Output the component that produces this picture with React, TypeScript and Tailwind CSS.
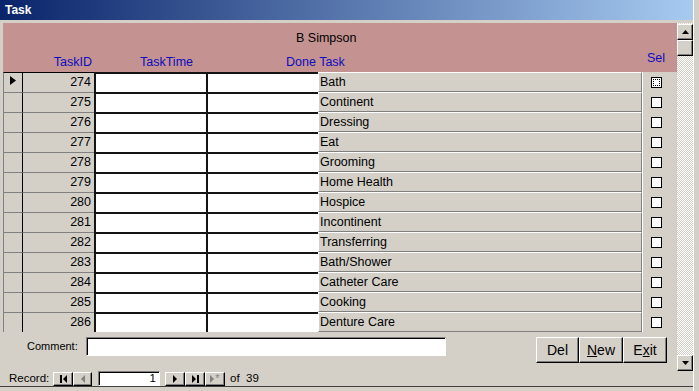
import React from 'react';

const rows: [number, string][] = [
  [274, 'Bath'],
  [275, 'Continent'],
  [276, 'Dressing'],
  [277, 'Eat'],
  [278, 'Grooming'],
  [279, 'Home Health'],
  [280, 'Hospice'],
  [281, 'Incontinent'],
  [282, 'Transferring'],
  [283, 'Bath/Shower'],
  [284, 'Catheter Care'],
  [285, 'Cooking'],
  [286, 'Denture Care'],
];

const raised =
  'bg-[#d4d0c8] border border-t-white border-l-white border-b-black border-r-black shadow-[inset_-1px_-1px_0_#808080]';

function NavBtn({ w, children }: { w: string; children: React.ReactNode }) {
  return <div className={`${w} h-[14px] flex items-center justify-center ${raised}`}>{children}</div>;
}

function Arrow({ dir, color = '#000' }: { dir: 'l' | 'r'; color?: string }) {
  return (
    <svg width="4" height="8" viewBox="0 0 4 8">
      <polygon points={dir === 'r' ? '0,0 4,4 0,8' : '4,0 0,4 4,8'} fill={color} />
    </svg>
  );
}

export default function App() {
  return (
    <div className="w-[699px] h-[391px] overflow-hidden bg-[#d4d0c8] flex font-['Liberation_Sans',Arial,sans-serif] text-black">
      <div className="w-[693px] flex flex-col">
        {/* title bar */}
        <div className="h-[20px] flex items-center pl-[5px] bg-[linear-gradient(to_right,#0a246a,#a6caf0)]">
          <span className="text-white font-bold text-[12px] leading-none">Task</span>
        </div>
        <div className="h-[3px]" />

        {/* form + scrollbar */}
        <div className="flex h-[348px]">
          <div className="w-[3px]" />
          <div className="w-[674px] flex flex-col">
            {/* header */}
            <div className="h-[49px] bg-[#c49290] flex flex-col">
              <div className="pt-[8px] pl-[293px] text-[12.5px] leading-[14px]">B Simpson</div>
              <div className="flex-1 flex items-end pb-[3px] text-[12.5px] leading-[14px] text-[#0c0cc0]">
                <div className="w-[20px]" />
                <div className="w-[71px] text-right pr-[2px]">TaskID</div>
                <div className="w-[112px] pl-[46px] whitespace-nowrap">TaskTime</div>
                <div className="w-[112px] pl-[80px] whitespace-nowrap">Done Task</div>
                <div className="w-[324px]" />
                <div className="pl-[5px] mb-[4px]">Sel</div>
              </div>
            </div>

            {/* detail rows */}
            <div className="flex flex-col">
              {rows.map(([id, task], i) => {
                const line = i === 0 ? 'border-black' : 'border-[#808080]';
                return (
                  <div key={id} className="h-[20px] flex text-[12.5px]">
                    <div className={`w-[20px] border-t border-l border-l-[#808080] border-r border-r-black ${line} flex items-center pl-[6px]`}>
                      {i === 0 && (
                        <svg width="6" height="9" viewBox="0 0 6 9" className="-mt-[4px]">
                          <polygon points="0,0 6,4.5 0,9" fill="#000" />
                        </svg>
                      )}
                    </div>
                    <div className={`w-[71px] border-t ${line} flex items-center justify-end pr-[3px]`}>{id}</div>
                    <div className="w-[112px] bg-white border-t-2 border-l-2 border-[#141414]" />
                    <div className="w-[112px] bg-white border-t-2 border-l-2 border-[#141414]" />
                    <div className="w-[324px] border border-t-white border-l-white border-b-[#808080] border-r-[#808080] shadow-[1px_0_0_#fff] flex items-center pl-[1px]">
                      {task}
                    </div>
                    <div className="flex-1 flex items-center pl-[9px]">
                      <div className="w-[11px] h-[11px] bg-white border border-black p-[1px]">
                        {i === 0 && <div className="w-full h-full border border-dotted border-black" />}
                      </div>
                    </div>
                  </div>
                );
              })}
            </div>

            {/* footer */}
            <div className="flex-1 flex items-start pt-[5px]">
              <div className="w-[83px] pl-[24px] h-[19px] flex items-center text-[11px]">Comment:</div>
              <div className="w-[360px] h-[19px] bg-white border border-t-[#808080] border-l-[#808080] border-b-white border-r-white shadow-[inset_1px_1px_0_#000]" />
              <div className="ml-[90px] flex text-[14px]">
                <div className={`w-[43px] h-[26px] flex items-center justify-center ${raised}`}>Del</div>
                <div className={`w-[44px] h-[26px] flex items-center justify-center ${raised}`}>
                  <span><span className="underline">N</span>ew</span>
                </div>
                <div className={`w-[44px] h-[26px] flex items-center justify-center ${raised}`}>
                  <span>E<span className="underline">x</span>it</span>
                </div>
              </div>
            </div>
          </div>

          {/* scrollbar */}
          <div className="w-[16px] flex flex-col pt-[1px] bg-[repeating-conic-gradient(#d4d0c8_0_25%,#ffffff_0_50%)] bg-[length:2px_2px]">
            <div className={`h-[16px] flex items-center justify-center ${raised}`}>
              <svg width="7" height="4" viewBox="0 0 7 4"><polygon points="0,4 3.5,0 7,4" fill="#000" /></svg>
            </div>
            <div className={`h-[16px] ${raised}`} />
            <div className="flex-1" />
            <div className={`h-[16px] flex items-center justify-center ${raised}`}>
              <svg width="7" height="4" viewBox="0 0 7 4"><polygon points="0,0 7,0 3.5,4" fill="#000" /></svg>
            </div>
          </div>
        </div>

        {/* record navigator */}
        <div className="h-[15px] flex items-center pl-[9px] text-[11.5px]">
          <div className="w-[44px]">Record:</div>
          <NavBtn w="w-[20px]">
            <div className="flex items-center gap-[1px]">
              <div className="w-[2px] h-[8px] bg-black" />
              <Arrow dir="l" />
            </div>
          </NavBtn>
          <NavBtn w="w-[19px]">
            <Arrow dir="l" color="#808080" />
          </NavBtn>
          <div className="ml-[6px] w-[62px] h-[15px] bg-white border border-t-[#808080] border-l-[#808080] border-b-white border-r-white shadow-[inset_1px_1px_0_#000] flex items-center justify-end pr-[3px]">
            1
          </div>
          <div className="ml-[5px] flex">
            <NavBtn w="w-[20px]">
              <Arrow dir="r" />
            </NavBtn>
            <NavBtn w="w-[20px]">
              <div className="flex items-center gap-[1px]">
                <Arrow dir="r" />
                <div className="w-[2px] h-[8px] bg-black" />
              </div>
            </NavBtn>
            <NavBtn w="w-[20px]">
              <div className="flex items-center gap-[1px]">
                <Arrow dir="r" color="#808080" />
                <span className="text-[#808080] text-[11px] leading-none">*</span>
              </div>
            </NavBtn>
          </div>
          <div className="ml-[5px]">of&nbsp;&nbsp;39</div>
        </div>
        <div className="flex-1 border-t border-[#404040]" />
      </div>
      <div className="w-[6px] border-l border-white" />
    </div>
  );
}
